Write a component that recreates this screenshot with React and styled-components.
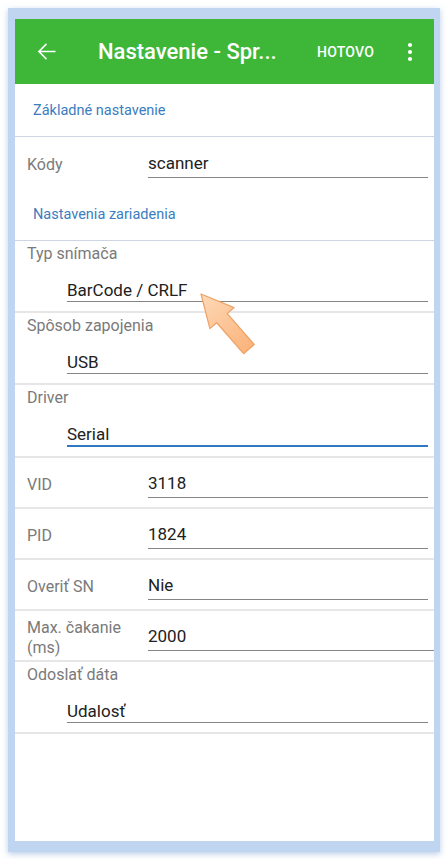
import React from 'react';
import styled, { createGlobalStyle } from 'styled-components';

const GlobalStyle = createGlobalStyle`
  html, body {
    margin: 0;
    padding: 0;
    background: #ffffff;
  }
  body {
    font-family: Roboto, 'Noto Sans', 'Liberation Sans', sans-serif;
  }
`;

// Frame around the phone screen
const Frame = styled.div`
  box-sizing: border-box;
  margin: 8px;
  width: 432px;
  height: 844px;
  border-style: solid;
  border-color: #bfd5f0;
  border-width: 11px 6px 11px 7px;
  box-shadow: 0 2px 6px rgba(130, 165, 215, 0.55);
`;

const Screen = styled.div`
  position: relative;
  height: 100%;
  background: #ffffff;
  display: flex;
  flex-direction: column;
`;

const AppBar = styled.header`
  height: 65px;
  flex-shrink: 0;
  background: #3eb739;
  color: #ffffff;
  display: flex;
  align-items: center;
  padding: 0 12px 0 18px;
`;

const IconButton = styled.div`
  width: ${(p) => p.$size || 24}px;
  height: ${(p) => p.$size || 24}px;
  display: flex;
  align-items: center;
  justify-content: center;
`;

const Title = styled.h1`
  flex: 1;
  margin: 0 0 0 38px;
  font-size: 22px;
  font-weight: 500;
  white-space: nowrap;
  overflow: hidden;
`;

const Action = styled.span`
  font-size: 14px;
  font-weight: 500;
  letter-spacing: 0.2px;
  margin-right: 24px;
`;

const SectionTitle = styled.div`
  height: 52px;
  display: flex;
  align-items: center;
  padding-left: 18px;
  font-size: 14.5px;
  color: #3a7dc0;
  border-bottom: ${(p) => (p.$divider ? '1px solid #cdd6e0' : 'none')};
`;

const Row = styled.div`
  box-sizing: border-box;
  display: flex;
  padding: ${(p) => (p.$stacked ? '3px 6px 9px 12px' : '4px 6px 0 12px')};
  flex-direction: ${(p) => (p.$stacked ? 'column' : 'row')};
  align-items: ${(p) => (p.$stacked ? 'stretch' : 'center')};
  min-height: ${(p) => (p.$stacked ? '72px' : '51px')};
  border-bottom: ${(p) => (p.$divider ? '2px solid #e6e6e6' : 'none')};
`;

const Label = styled.div`
  width: ${(p) => (p.$stacked ? 'auto' : '121px')};
  flex-shrink: 0;
  font-size: 16px;
  line-height: 20px;
  color: #7a7a7a;
`;

const Field = styled.div`
  flex: 1;
  margin: ${(p) => (p.$stacked ? '15px 0 0 40px' : '0')};
  margin-right: ${(p) => (p.$wide ? '-6px' : '0')};
  font-size: 17px;
  line-height: 22px;
  color: #212121;
  padding-bottom: ${(p) => (p.$stacked ? '0' : '3px')};
  border-bottom: ${(p) => (p.$active ? '2px solid #2f78c4' : '1px solid #858585')};
`;

const Pointer = styled.svg`
  position: absolute;
  left: 165px;
  top: 261px;
  overflow: visible;
`;

const BackIcon = () => (
  <svg width="27" height="27" viewBox="0 0 24 24" fill="#fff">
    <path d="M20 11.25H6.9l5.55-5.55L11.5 4.75 4.25 12l7.25 7.25.95-.95-5.55-5.55H20v-1.5z" />
  </svg>
);

const MoreIcon = () => (
  <svg width="24" height="24" viewBox="0 0 24 24" fill="#fff">
    <circle cx="12" cy="5" r="2.1" />
    <circle cx="12" cy="12" r="2.1" />
    <circle cx="12" cy="19" r="2.1" />
  </svg>
);

const ArrowCallout = () => (
  <Pointer width="90" height="90" viewBox="0 0 90 90">
    <defs>
      <linearGradient id="arrowFill" x1="0" y1="0" x2="0" y2="1">
        <stop offset="0" stopColor="#fed9b8" />
        <stop offset="1" stopColor="#fbb47c" />
      </linearGradient>
    </defs>
    <g transform="translate(21 14) rotate(-41)">
      <polygon
        points="0,0 16,32 7,32 7,73 -7,73 -7,32 -16,32"
        fill="url(#arrowFill)"
        stroke="#eea264"
        strokeWidth="1.2"
        strokeLinejoin="round"
      />
    </g>
  </Pointer>
);

const fields = [
  { label: 'Typ snímača', value: 'BarCode / CRLF', stacked: true },
  { label: 'Spôsob zapojenia', value: 'USB', stacked: true },
  { label: 'Driver', value: 'Serial', stacked: true, active: true },
  { label: 'VID', value: '3118' },
  { label: 'PID', value: '1824' },
  { label: 'Overiť SN', value: 'Nie' },
  { label: 'Max. čakanie (ms)', value: '2000', wide: true },
  { label: 'Odoslať dáta', value: 'Udalosť', stacked: true },
];

export default function App() {
  return (
    <>
      <GlobalStyle />
      <Frame>
        <Screen>
          <AppBar>
            <IconButton $size={27}>
              <BackIcon />
            </IconButton>
            <Title>Nastavenie - Spr...</Title>
            <Action>HOTOVO</Action>
            <IconButton>
              <MoreIcon />
            </IconButton>
          </AppBar>

          <SectionTitle $divider>Základné nastavenie</SectionTitle>
          <Row>
            <Label>Kódy</Label>
            <Field>scanner</Field>
          </Row>
          <SectionTitle $divider>Nastavenia zariadenia</SectionTitle>

          {fields.map((f) => (
            <Row key={f.label} $stacked={f.stacked} $divider>
              <Label $stacked={f.stacked}>{f.label}</Label>
              <Field $stacked={f.stacked} $active={f.active} $wide={f.wide}>
                {f.value}
              </Field>
            </Row>
          ))}

          <ArrowCallout />
        </Screen>
      </Frame>
    </>
  );
}
